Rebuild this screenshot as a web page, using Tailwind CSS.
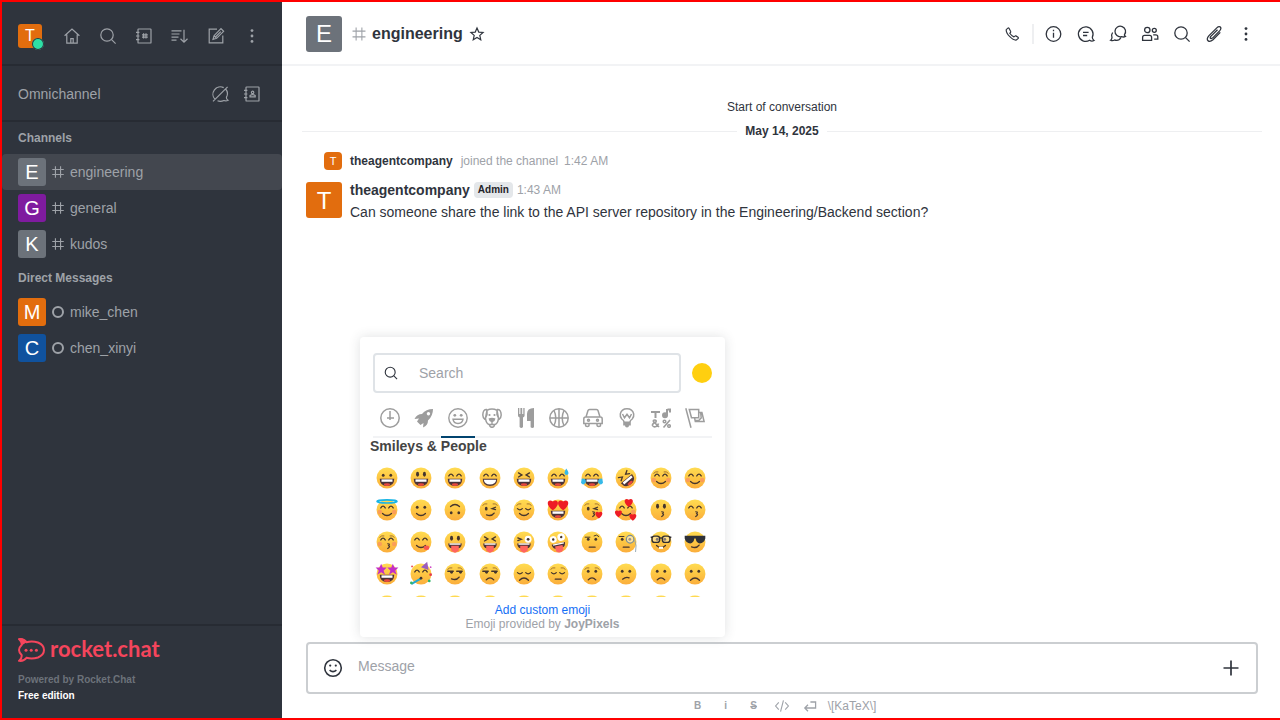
<!DOCTYPE html>
<html lang="en">
<head>
<meta charset="utf-8">
<meta name="viewport" content="width=device-width, initial-scale=1">
<title>engineering - Rocket.Chat</title>
<script src="https://cdn.jsdelivr.net/npm/@tailwindcss/browser@4"></script>
</head>
<body class="flex h-screen overflow-hidden border-y-2 border-l-2 border-[#ff0000] bg-white font-['Liberation_Sans',Arial,sans-serif] text-sm text-[#2f343d]">

<svg class="hidden" aria-hidden="true">
  <symbol id="i-home" viewBox="0 0 20 20"><path d="M2.600 9.800 10 3l7.400 6.800M4.800 8.400V17.200h10.400V8.400M8.800 17v-4.400h2.400V17" /></symbol>
  <symbol id="i-search" viewBox="0 0 20 20"><circle cx="9" cy="9" r="6.2" /><path d="m13.6 13.6 4 4" /></symbol>
  <symbol id="i-dir" viewBox="0 0 20 20"><rect x="4" y="3" width="13" height="14" rx=".6" /><path d="M2 6.3h3.4M2 10h3.4M2 13.7h3.4M9.6 7.2v5.4M12 7.2v5.4M8 8.8h5.8M8 11.1h5.8" /></symbol>
  <symbol id="i-sort" viewBox="0 0 20 20"><path d="M1.500 4.8h10M1.500 8h8M1.500 11.2h7M1.500 14.2h5M14 3.800v12M10.500 12.800l3.500 3.400 3.500-3.400" /></symbol>
  <symbol id="i-edit" viewBox="0 0 20 20"><path d="M11 3.2H3.2v13.7h13.6V9.5M7 13.4l1-3.7 7-7 2.6 2.6-7 7zM8 9.7l2.6 2.6M9.5 11l5.3-5.3" /></symbol>
  <symbol id="i-kebab" viewBox="0 0 20 20"><g fill="currentColor" stroke="none"><circle cx="10" cy="4.6" r="1.4" /><circle cx="10" cy="10" r="1.4" /><circle cx="10" cy="15.4" r="1.4" /></g></symbol>
  <symbol id="i-chatoff" viewBox="0 0 20 20"><path d="M5 15.3A7.4 7.4 0 0 1 13.7 3.6M15.6 5A7.4 7.4 0 0 1 16.4 13.4Q16.2 15.4 18 16.3 16 17.4 14 16.5 10.5 18 7.5 16.8M3 17.4 17.6 2.8" /></symbol>
  <symbol id="i-contact" viewBox="0 0 20 20"><rect x="4" y="3" width="13" height="14" rx=".6" /><path d="M2 6.3h3.4M2 10h3.4M2 13.7h3.4M8 12.8v-1.3q2.7-1.6 5.2 0v1.3z" /><circle cx="10.6" cy="8.4" r="1.2" /></symbol>
  <symbol id="i-hash" viewBox="0 0 20 20"><path d="M6.8 2.8v14.4M13.2 2.8v14.4M2.8 6.8h14.4M2.8 13.2h14.4" /></symbol>
  <symbol id="i-star" viewBox="0 0 20 20"><path d="m10 2.6 2.2 5 5.4.5-4.1 3.6 1.2 5.4-4.7-2.8-4.7 2.8 1.2-5.4-4.1-3.6 5.4-.5z" /></symbol>
  <symbol id="i-phone" viewBox="0 0 20 20"><path d="M5.4 3.500 3.600 5.200Q3.200 8.600 7.600 13t7.300 3.700l2-1.800q.5-.7-.2-1.200l-2.400-1.600q-.7-.3-1.200.2l-1 .9Q9.800 12.400 7.500 9.200l.9-1.100q.4-.5 0-1.100L6.700 3.700q-.5-.7-1.300-.2z" /></symbol>
  <symbol id="i-info" viewBox="0 0 20 20"><circle cx="9.500" cy="10" r="7.300" /><path d="M9.500 8.700v5M9.500 5.800v1.400" /></symbol>
  <symbol id="i-thread" viewBox="0 0 20 20"><path d="M16.300 13.300A7.300 7.300 0 1 0 13.600 16.300Q15.800 17.700 18 16.500 16.300 15.500 16.300 13.300zM7 8.400h5.600M7 11.500h4.200" /></symbol>
  <symbol id="i-discuss" viewBox="0 0 20 20"><path d="M16.400 10.800A5.300 5.300 0 1 0 13.600 12.600Q15.600 13.500 17.400 12.400 16.300 11.700 16.400 10.800zM4.600 8.500Q2.900 11 4 13.500 3.800 15.500 2.600 16.200 4.600 17.200 6.600 16 11 17.200 12.800 13.700" /></symbol>
  <symbol id="i-team" viewBox="0 0 20 20"><circle cx="7.300" cy="6" r="2.700" /><circle cx="14.300" cy="6.300" r="2" /><path d="M2.600 16.400v-3q0-2 2-2h5q2 0 2 2v3zM13.200 10.800h2.600q2 0 2 2v2.400h-3.600" /></symbol>
  <symbol id="i-clip" viewBox="0 0 20 20"><path d="m13.500 5.700-6.700 6.700q-1.300 1.800.2 2.100 1 .1 2-.9l6.600-6.700q2.300-2.800.5-4-1.500-.7-3.300 1L5 11.600q-3 3.600-.8 5.300 2 1.200 4.800-1.200l7.300-7.300" /></symbol>
  <symbol id="i-code" viewBox="0 0 20 20"><path d="M6 5.500 2 10l4 4.500M14 5.500l4 4.500-4 4.500M11.800 3 8.200 17" /></symbol>
  <symbol id="i-return" viewBox="0 0 20 20"><path d="M10.500 5h6.500v7.500H4M7.500 8.500l-4 4 4 4" /></symbol>
  <symbol id="i-smile" viewBox="0 0 20 20"><circle cx="10" cy="10" r="8.300" /><path d="M6.600 12.200q3.400 3 6.800 0" /><g fill="currentColor" stroke="none"><circle cx="7.200" cy="7.600" r="1.100" /><circle cx="12.800" cy="7.600" r="1.100" /></g></symbol>
</svg>

<aside class="flex w-[280px] shrink-0 flex-col bg-[#2f343d] text-[#9ea2a8]">
  <div class="flex h-16 items-center justify-between border-b-2 border-[#272b33] px-4 pt-1.5">
    <button aria-label="User menu" class="relative mr-2 flex size-6 items-center justify-center rounded-[3px] bg-[#e26d0e] text-base text-white">T<span class="absolute -right-0.5 -bottom-0.5 size-3 rounded-full bg-[#2de0a5] ring-1 ring-[#2f343d] ring-inset"></span></button>
    <button aria-label="Home" class="flex size-7 items-center justify-center"><svg class="size-5 fill-none stroke-current stroke-[1.200]"><use href="#i-home" /></svg></button>
    <button aria-label="Search" class="flex size-7 items-center justify-center"><svg class="size-5 fill-none stroke-current stroke-[1.200]"><use href="#i-search" /></svg></button>
    <button aria-label="Directory" class="flex size-7 items-center justify-center"><svg class="size-5 fill-none stroke-current stroke-[1.200]"><use href="#i-dir" /></svg></button>
    <button aria-label="Display" class="flex size-7 items-center justify-center"><svg class="size-5 fill-none stroke-current stroke-[1.200]"><use href="#i-sort" /></svg></button>
    <button aria-label="Create new" class="flex size-7 items-center justify-center"><svg class="size-5 fill-none stroke-current stroke-[1.200]"><use href="#i-edit" /></svg></button>
    <button aria-label="Administration" class="flex size-7 items-center justify-center"><svg class="size-5 fill-none stroke-current"><use href="#i-kebab" /></svg></button>
  </div>
  <div class="flex h-14 items-center gap-1 border-b-2 border-[#272b33] px-4 pt-0.5">
    <h2 class="flex-1">Omnichannel</h2>
    <button aria-label="Turn on answer chats" class="flex size-7 items-center justify-center"><svg class="size-5 fill-none stroke-current stroke-[1.200]"><use href="#i-chatoff" /></svg></button>
    <button aria-label="Contact center" class="flex size-7 items-center justify-center"><svg class="size-5 fill-none stroke-current stroke-[1.200]"><use href="#i-contact" /></svg></button>
  </div>
  <nav class="flex-1">
    <h3 class="flex h-8 items-center px-4 text-xs font-bold">Channels</h3>
    <a href="#engineering" class="flex h-9 items-center gap-1 rounded-sm bg-[#43474f] px-4"><span class="flex size-7 items-center justify-center rounded-[3px] bg-[#6c727a] text-xl text-white">E</span><svg class="size-4 fill-none stroke-current stroke-[1.400]"><use href="#i-hash" /></svg>engineering</a>
    <a href="#general" class="flex h-9 items-center gap-1 px-4"><span class="flex size-7 items-center justify-center rounded-[3px] bg-[#7f1b9f] text-xl text-white">G</span><svg class="size-4 fill-none stroke-current stroke-[1.400]"><use href="#i-hash" /></svg>general</a>
    <a href="#kudos" class="flex h-9 items-center gap-1 px-4"><span class="flex size-7 items-center justify-center rounded-[3px] bg-[#6c727a] text-xl text-white">K</span><svg class="size-4 fill-none stroke-current stroke-[1.400]"><use href="#i-hash" /></svg>kudos</a>
    <h3 class="flex h-8 items-center px-4 text-xs font-bold">Direct Messages</h3>
    <a href="#mike_chen" class="flex h-9 items-center px-4"><span class="flex size-7 items-center justify-center rounded-[3px] bg-[#e26d0e] text-xl text-white">M</span><span class="mr-1.5 ml-1.5 size-3 rounded-full border-2 border-[#9ea2a8]"></span>mike_chen</a>
    <a href="#chen_xinyi" class="flex h-9 items-center px-4"><span class="flex size-7 items-center justify-center rounded-[3px] bg-[#10529e] text-xl text-white">C</span><span class="mr-1.5 ml-1.5 size-3 rounded-full border-2 border-[#9ea2a8]"></span>chen_xinyi</a>
  </nav>
  <footer class="border-t-2 border-[#272b33] px-4 pt-3 pb-3.5 text-[10px] font-bold">
    <a href="#home" class="flex h-6 items-start gap-1 text-[#f5455c]">
      <svg viewBox="0 0 28 24" class="h-6 w-7 fill-none stroke-current stroke-2"><path d="M1.200 1.200Q5.500.300 8.500 4.200 14 2.500 20 4.500 26 7 26 12T20 19.500Q14 21.500 8.500 19.800 5.500 23.500 1.200 22.800 4.200 20 3.600 17 1 14.500 1 12T3.600 7Q4.200 4 1.200 1.200z" /><path d="M.500.300Q6-.300 9 4L4 7.200Q3.800 3 .500.300z" fill="currentColor" stroke="none" /><g fill="currentColor" stroke="none"><circle cx="8" cy="12.200" r="1.500" /><circle cx="13.200" cy="12.200" r="1.500" /><circle cx="18.400" cy="12.200" r="1.500" /></g></svg>
      <span class="font-[Lato,sans-serif] text-[22px] leading-[22px]">rocket.chat</span>
    </a>
    <p class="mt-2.5 leading-4 text-[#6c727a]">Powered by Rocket.Chat</p>
    <p class="leading-4 text-white">Free edition</p>
  </footer>
</aside>

<main class="flex min-w-0 flex-1 flex-col">
  <header class="flex h-16 shrink-0 items-center gap-1 border-b-2 border-[#f2f3f5] pt-0.5 pr-5 pl-6">
    <span class="mr-1 flex size-9 items-center justify-center rounded-[3px] bg-[#6c727a] text-2xl text-white">E</span>
    <svg class="size-[18px] fill-none stroke-[#9ea2a8] stroke-[1.200]"><use href="#i-hash" /></svg>
    <h1 class="text-base font-bold">engineering</h1>
    <button aria-label="Favorite"><svg class="ml-0.5 size-4 fill-none stroke-current stroke-[1.5]"><use href="#i-star" /></svg></button>
    <div class="ml-auto flex items-center gap-1">
      <button aria-label="Call" class="flex size-7 items-center justify-center"><svg class="size-[18px] fill-none stroke-current stroke-[1.3]"><use href="#i-phone" /></svg></button>
      <span class="mx-0.5 h-5 w-0.5 bg-[#eeeff1]"></span>
      <button aria-label="Room information" class="flex size-7 items-center justify-center"><svg class="size-5 fill-none stroke-current stroke-[1.3]"><use href="#i-info" /></svg></button>
      <button aria-label="Threads" class="flex size-7 items-center justify-center"><svg class="size-5 fill-none stroke-current stroke-[1.3]"><use href="#i-thread" /></svg></button>
      <button aria-label="Discussions" class="flex size-7 items-center justify-center"><svg class="size-5 fill-none stroke-current stroke-[1.3]"><use href="#i-discuss" /></svg></button>
      <button aria-label="Members" class="flex size-7 items-center justify-center"><svg class="size-5 fill-none stroke-current stroke-[1.3]"><use href="#i-team" /></svg></button>
      <button aria-label="Search messages" class="flex size-7 items-center justify-center"><svg class="size-5 fill-none stroke-current stroke-[1.3]"><use href="#i-search" /></svg></button>
      <button aria-label="Files" class="flex size-7 items-center justify-center"><svg class="size-5 fill-none stroke-current stroke-[1.3]"><use href="#i-clip" /></svg></button>
      <button aria-label="Options" class="flex size-7 items-center justify-center"><svg class="size-5 fill-none stroke-current"><use href="#i-kebab" /></svg></button>
    </div>
  </header>

  <section class="min-h-0 flex-1 pt-8 pr-[18px] pl-5" aria-label="Messages">
    <p class="text-center text-xs leading-[18px]">Start of conversation</p>
    <div class="mt-1.5 flex items-center gap-2 text-xs leading-[18px] font-bold"><span class="h-px flex-1 bg-[#eeeff1]"></span>May 14, 2025<span class="h-px flex-1 bg-[#eeeff1]"></span></div>
    <div class="mt-3 ml-[22px] flex h-[18px] items-center text-xs">
      <span class="mr-2 flex size-[18px] items-center justify-center rounded-sm bg-[#e26d0e] text-[11px] text-white">T</span>
      <b>theagentcompany</b><span class="ml-2 text-[#9ea2a8]">joined the channel</span><time class="ml-1.5 text-[#9ea2a8]">1:42 AM</time>
    </div>
    <article class="mt-3 flex gap-2 pl-1">
      <span class="flex size-9 items-center justify-center rounded-[3px] bg-[#e26d0e] pt-0.5 text-2xl text-white">T</span>
      <div>
        <div class="flex h-4 items-center gap-1"><b>theagentcompany</b><span class="h-4 rounded-sm bg-[#e4e7ea] px-1 text-[10px] leading-4 font-bold text-[#1f2329]">Admin</span><time class="text-xs text-[#9ea2a8]">1:43 AM</time></div>
        <p class="mt-1 leading-5">Can someone share the link to the API server repository in the Engineering/Backend section?</p>
      </div>
    </article>
  </section>

  <footer class="pr-[22px] pl-6">
    <div class="relative flex h-[52px] items-center rounded border-2 border-[#cbced1] px-[15px]">
      <button aria-label="Emoji"><svg class="size-5 fill-none stroke-current stroke-[1.6]"><use href="#i-smile" /></svg></button>
      <input aria-label="Message" placeholder="Message" class="mx-[15px] h-6 min-w-0 flex-1 pb-1 outline-none placeholder:text-[#9ea2a8]">
      <button aria-label="More actions"><svg viewBox="0 0 20 20" class="size-5 stroke-current stroke-[1.700]"><path d="M10 2.500v15M2.500 10h15" /></svg></button>

      <div class="absolute bottom-full left-[52px] mb-[7px] flex h-[300px] w-[365px] flex-col rounded bg-white pt-4 shadow-[0_0_12px_#2f343d26]" role="dialog" aria-label="Emoji picker">
        <div class="flex items-center gap-[11px] px-[13px]">
          <label class="flex h-10 flex-1 items-center rounded border-2 border-[#dfe3e7] px-2"><svg class="size-4 shrink-0 fill-none stroke-current stroke-[1.400]"><use href="#i-search" /></svg><input aria-label="Search emoji" placeholder="Search" class="ml-5 w-full min-w-0 outline-none placeholder:text-[#9ea2a8]"></label>
          <button aria-label="Skin tone" class="size-5 rounded-full bg-[#ffcf10]"></button>
        </div>
        <div class="mx-[13px] mt-2 grid h-[37px] grid-cols-10 border-b-2 border-[#f2f3f5] text-[#9d9d9d]" role="tablist">
          <button role="tab" aria-label="Recent" class="flex justify-center pt-[7px]"><svg viewBox="0 0 20 20" class="size-5 fill-none stroke-current stroke-[1.500]"><circle cx="10" cy="10" r="9.200" /><path d="M10 3v9M7 10h7" /></svg></button>
          <button role="tab" aria-label="Rocket" class="flex justify-center pt-[7px]"><svg viewBox="0 0 20 20" class="size-5 fill-current"><path fill-rule="evenodd" d="M19 1Q12 1 8 6 3 6 .500 11l4.500-.500-2 3 3.500 3.500 3-2-.500 4.500q5-2 5-7Q19 8 19 1zm-4.500 3a1.700 1.700 0 1 1-.1 0z" /></svg></button>
          <button role="tab" aria-selected="true" aria-label="Smileys and people" class="-mb-0.5 flex justify-center border-b-2 border-[#01446f] pt-[7px]"><svg viewBox="0 0 20 20" class="size-5 fill-none stroke-current stroke-[1.400]"><circle cx="10" cy="10" r="9.200" /><path d="M5 11.200h10q-.500 4.300-5 4.300t-5-4.300z" /><g fill="currentColor" stroke="none"><circle cx="6.800" cy="7.300" r="1.400" /><circle cx="13.200" cy="7.300" r="1.400" /></g></svg></button>
          <button role="tab" aria-label="Animals and nature" class="flex justify-center pt-[7px]"><svg viewBox="0 0 20 20" class="size-5 fill-none stroke-current stroke-[1.500]"><path d="M5 2.200q5-2.400 10 0l1.500 8q-.500 5-3.500 6.300H7Q4 15.200 3.500 10.200zM5 1.500Q1 1 .8 7q0 3 2.300 4.500M15 1.500q4-.500 4.200 5.500 0 3-2.300 4.500M5 2v4.500L3.500 10M15 2v4.500l1.500 3.500M7.500 16q0 3.300 2.500 3.300t2.500-3.300" /><path d="M6.500 10.500q3.500-1.500 7 0L12.500 13 10 14.500 7.500 13zM9.300 14h1.400v3H9.300z" fill="currentColor" stroke="none" /><circle cx="7.500" cy="7" r="1.100" fill="currentColor" stroke="none" /><circle cx="12.500" cy="7" r="1.100" fill="currentColor" stroke="none" /></svg></button>
          <button role="tab" aria-label="Food and drink" class="flex justify-center pt-[7px]"><svg viewBox="0 0 20 20" class="size-5 fill-current"><path d="M2 0h1.300v6h1.100V0h1.800v6h1.100V0h1.300v7.500Q8.600 9 7 9.500V19q-1.700 2-3.400 0V9.500Q2 9 2 7.500zM18 0v19.200q-1.700 1.600-3.400 0V13H11V6q0-6 7-6z" /></svg></button>
          <button role="tab" aria-label="Activity" class="flex justify-center pt-[7px]"><svg viewBox="0 0 20 20" class="size-5 fill-none stroke-current stroke-[1.500]"><circle cx="10" cy="10" r="9.200" /><path d="M10 1v18M1 10h18M5 2.500q3.600 7.500 0 15M15 2.500q-3.600 7.500 0 15" /></svg></button>
          <button role="tab" aria-label="Travel" class="flex justify-center pt-[7px]"><svg viewBox="0 0 20 20" class="size-5 fill-none stroke-current stroke-[1.500]"><path d="M3 9 5 2.500Q5.300 1.500 6.500 1.500h7q1.200 0 1.500 1L17 9M2.500 9h15q1.700 0 1.700 2v4.500H.800V11q0-2 1.700-2zM2.500 15.500v1.800q0 1.200 1.800 1.200T6 17.300v-1.800M14 15.500v1.800q0 1.200 1.800 1.200t1.700-1.200v-1.800" /><circle cx="5.500" cy="12.300" r="1" /><circle cx="14.500" cy="12.300" r="1" /></svg></button>
          <button role="tab" aria-label="Objects" class="flex justify-center pt-[7px]"><svg viewBox="0 0 20 20" class="size-5 fill-none stroke-current stroke-[1.500]"><path d="M7 14Q7 12.500 4.800 11Q2.800 9 3.300 6Q4.500.800 10 .800T16.700 6Q17.200 9 15.200 11Q13 12.500 13 14M5.500 6l2 3.800L10 6.300l2.500 3.500 2-3.800" /><path d="M6.200 13.500h7.600v4H12q0 2-2 2t-2-2H6.200z" fill="currentColor" stroke="none" /></svg></button>
          <button role="tab" aria-label="Symbols" class="flex justify-center pt-[7px]"><svg viewBox="0 0 20 20" class="size-5 fill-none stroke-current stroke-2"><path d="M0 4h9M4.500 4v6M16 7.500V1M16.500 1.500h2.500v3" /><circle cx="14" cy="7.300" r="2" fill="currentColor" /><path d="M8 19 2.500 13.500Q2 12 3.800 12T5 14Q1 15.500 1.500 17.500 2.500 19.500 5 18.500 7 17.500 7.500 15.500M19 12l-6.500 7.500" stroke-width="1.600" /><circle cx="13.500" cy="13.500" r="1.300" stroke-width="1.500" /><circle cx="18" cy="18" r="1.300" stroke-width="1.500" /></svg></button>
          <button role="tab" aria-label="Flags" class="flex justify-center pt-[7px]"><svg viewBox="0 0 20 20" class="size-5 fill-none stroke-current stroke-[1.500]"><path d="M.800.300 6 19.700M4.300 1.500h9.400v8.200H6.500zM13.700 4.500h3.200l2.200 9h-8.800L9.500 9.700M9.700 12.500h4l2.500-2.500-.500-5" /></svg></button>
        </div>
        <div class="h-[159px] overflow-hidden px-2.5">
          <h3 class="h-6 leading-[17px] font-bold text-[#444]">Smileys &amp; People</h3>
          <div id="emoji-grid" class="-mr-[7px] grid w-[342px] grid-cols-10"></div>
        </div>
        <div class="mt-1.5 text-center text-xs leading-[14px] text-[#9ea2a8]"><a href="#custom" class="block text-[#156ff5]">Add custom emoji</a><p>Emoji provided by <b>JoyPixels</b></p></div>
      </div>
    </div>
    <div class="flex h-6 items-center justify-center gap-3 pl-0.5 text-xs text-[#9ea2a8]" role="toolbar" aria-label="Formatting">
      <button aria-label="Bold" class="w-4 text-[10px] font-bold">B</button>
      <button aria-label="Italic" class="w-4 text-[10px] font-bold">i</button>
      <button aria-label="Strike" class="w-4 text-[10px] font-bold line-through">S</button>
      <button aria-label="Code"><svg class="size-4 fill-none stroke-current stroke-[1.400]"><use href="#i-code" /></svg></button>
      <button aria-label="Multiline"><svg class="size-4 fill-none stroke-current stroke-[1.600]"><use href="#i-return" /></svg></button>
      <a href="#katex" class="-ml-0.5">\[KaTeX\]</a>
    </div>
  </footer>
</main>

<svg class="absolute size-0" aria-hidden="true"><defs><linearGradient id="skin" x1="0" y1="0" x2="0" y2="1"><stop offset="0" stop-color="#ffdb52" /><stop offset=".5" stop-color="#fdc643" /><stop offset="1" stop-color="#fbae3c" /></linearGradient></defs></svg>

<script>
  // Faces are assembled from shared parts on a 32-unit canvas.
  const line = (d, w = 1.9, c = '#45352d') => `<path d="${d}" fill="none" stroke="${c}" stroke-width="${w}" stroke-linecap="round"/>`;
  const shape = (d, c) => `<path d="${d}" fill="${c}"/>`;
  const oval = (x, y, rx, ry, c = '#45352d') => `<ellipse cx="${x}" cy="${y}" rx="${rx}" ry="${ry}" fill="${c}"/>`;
  const heart = (x, y, s) => `<path transform="translate(${x} ${y}) scale(${s})" d="M0 5C-8-1-4-6 0-3 4-6 8-1 0 5z" fill="#ee1c25"/>`;
  const star = (x) => `<path transform="translate(${x} 9) scale(1.15)" d="M0-7 2-2 7-2 3 2 5 7 0 4-5 7-3 2-7-2-2-2z" fill="#c22fc6"/>`;
  const P = {
    dots: oval(10.5, 12, 2, 2.3) + oval(21.5, 12, 2, 2.3),
    tall: oval(11, 10.5, 2.2, 3.6) + oval(21, 10.5, 2.2, 3.6),
    happy: line('M7 13q3.200-5 6.400 0M18.600 13q3.200-5 6.400 0'),
    shut: line('M6.500 14q3.500 3.500 7 0M18.500 14q3.500 3.500 7 0'),
    squint: line('M8 8.500l5 3-5 3M24 8.500l-5 3 5 3'),
    wink: oval(10.5, 14, 2, 2.7) + line('M24 12l-5 2 5 1.500'),
    side: line('M5.500 12h8M18.500 12h8') + oval(11, 13.5, 2, 2) + oval(24, 13.5, 2, 2),
    brows: line('M5.500 9q2.500-3 6-2M20.500 7q3.500-1 6 2', 1.3, '#9a682b'),
    blush: oval(5.5, 19, 3.3, 3.3, '#f98b64aa') + oval(26.5, 19, 3.3, 3.3, '#f98b64aa'),
    grin: shape('M5.500 17h21q0 10.500-10.500 10.500T5.500 17z', '#4b3338') + shape('M8 18h16v3.500H8z', '#fff') + oval(16, 25.500, 4.500, 2, '#e8483f'),
    teeth: shape('M5.500 17h21q0 10.500-10.500 10.500T5.500 17z', '#4b3338') + shape('M7 18.500h18q-1 7-9 7t-9-7z', '#fff'),
    smile: line('M9.500 21q6.500 6 13 0'),
    kiss: line('M17 18.500q4 0 1.500 2.500l-1 .5q4 0 1 3l-1.500 1', 1.7),
    frown: line('M10.500 24.500q5.500-6 11 0'),
    big: line('M9.500 25q6.500-6.500 13 0'),
    flat: line('M12 23.500h8.500'),
    skew: line('M11 23.500q5-4 9.500-2'),
    smirk: line('M11 23q7 3 11-2.500'),
    tongue: shape('M6 18h20q-1 7-5 7H11q-4 0-5-7z', '#4b3338') + shape('M8 18h16v2H8z', '#fff') + shape('M10.500 21.500h11v7q-5.500 6-11 0z', '#ff655f'),
    tears: shape('M1 17q7-1 6 6-4 5-7 0zM31 17q-7-1-6 6 4 5 7 0z', '#36b9e8')
  };
  const turn = (a, s) => `<g transform="rotate(${a} 16 16)">${s}</g>`;
  const faces = [
    ['grinning', P.dots + P.grin], ['smiley', P.tall + P.grin], ['smile', P.happy + P.grin], ['grin', P.happy + P.teeth], ['laughing', P.squint + P.grin],
    ['sweat smile', P.happy + P.grin + shape('M28 2q6 8 1 9.500-7 0-1-9.500z', '#36b9e8')], ['joy', P.happy + P.grin + P.tears], ['rofl', turn(-40, P.squint + P.grin)], ['relaxed', P.blush + P.brows + P.happy + P.smile], ['blush', P.blush + P.happy + P.smile],
    ['innocent', P.blush + P.happy + P.smile + `<ellipse cx="16" cy="3.500" rx="14.500" ry="2.300" fill="none" stroke="#19b5e6" stroke-width="2.500"/>`], ['slight smile', P.dots + P.smile], ['upside down', turn(180, P.dots + P.smile)], ['wink', P.brows + P.wink + P.smirk], ['relieved', P.brows + P.shut + P.smile],
    ['heart eyes', P.grin + heart(8.5, 8.5, 1.6) + heart(23.5, 8.5, 1.6)], ['kissing heart', P.brows + P.wink + P.kiss + heart(26, 23, 1.1)], ['smiling hearts', P.blush + P.happy + P.smile + heart(20, 5, 1.3) + heart(5, 21, 1.1) + heart(26, 26, 1.1)], ['kissing', P.tall + P.kiss], ['kissing smiling eyes', P.happy + P.kiss],
    ['kissing closed eyes', P.blush + P.brows + P.happy + P.kiss], ['yum', P.happy + P.smile + oval(24, 24.5, 4, 3.3, '#f9574f')], ['stuck out tongue', P.tall + P.tongue], ['tongue closed eyes', P.squint + P.tongue], ['tongue winking eye', line('M7 10l5 2-5 2') + oval(22, 12, 5, 5, '#fff') + oval(22, 12, 2, 2) + P.tongue],
    ['zany', turn(-12, oval(10, 11, 5, 5, '#fff') + oval(22, 10, 5.5, 5.5, '#fff') + oval(10, 11, 1.8, 1.8) + oval(22, 10, 1.8, 1.8) + P.tongue)], ['raised eyebrow', P.dots + P.flat + line('M6 9h7M19 7q4-3 7 1', 1.4)], ['monocle', P.dots + P.flat + line('M6 8h7', 1.4) + `<circle cx="22" cy="12" r="5.500" fill="#ffffff77" stroke="#788d98" stroke-width="1.800"/>` + line('M29 14q3 6 1 16', 1.3, '#8fa3ad')], ['nerd', P.dots + P.smile + `<path d="M1 9h2M13 11q3-2 6 0M29 9h2" stroke="#302d32" stroke-width="2" fill="none"/><rect x="3" y="7.500" width="11" height="9" rx="3.500" fill="#ffffff55" stroke="#302d32" stroke-width="2"/><rect x="18" y="7.500" width="11" height="9" rx="3.500" fill="#ffffff55" stroke="#302d32" stroke-width="2"/>` + shape('M13 23h6v3h-6z', '#fff')], ['sunglasses', shape('M1 7h30v4q-2 7-8 7-5 0-6-7h-2q-1 7-6 7-6 0-8-7z', '#2e3138') + P.smirk],
    ['star struck', P.grin + star(7.5) + star(24.5)], ['partying', P.happy + line('M3 30l12-7', 2.8, '#24a8d0') + oval(16, 22, 2, 2) + shape('M16 6 25-2l2 12z', '#9a5cbe') + oval(3, 5, 1.3, 1.3, '#e63d49') + oval(30, 17, 2, 2, '#e63d49') + oval(28, 26, 2, 2, '#31b568') + oval(2, 29, 2, 2, '#31b568') + oval(30, 6, 1.3, 1.3, '#d04bc9')], ['smirk', P.brows + P.side + P.smirk], ['unamused', P.brows + P.side + P.frown], ['disappointed', P.shut + P.big],
    ['pensive', P.brows + P.shut + P.flat], ['worried', P.brows + P.dots + P.frown], ['confused', P.dots + P.skew], ['slight frown', P.dots + P.frown], ['frowning', P.dots + P.big]
  ];
  for (let n = 0; n < 10; n++) faces.push(['face ' + (n + 41), P.dots]);
  document.getElementById('emoji-grid').innerHTML = faces.map(([name, art]) =>
    `<button aria-label="${name}" class="flex h-8 items-center justify-center"><svg viewBox="0 0 32 32" class="size-[22px] overflow-visible"><circle cx="16" cy="16" r="15.200" fill="url(#skin)"/>${art}</svg></button>`).join('');
</script>
</body>
</html>
